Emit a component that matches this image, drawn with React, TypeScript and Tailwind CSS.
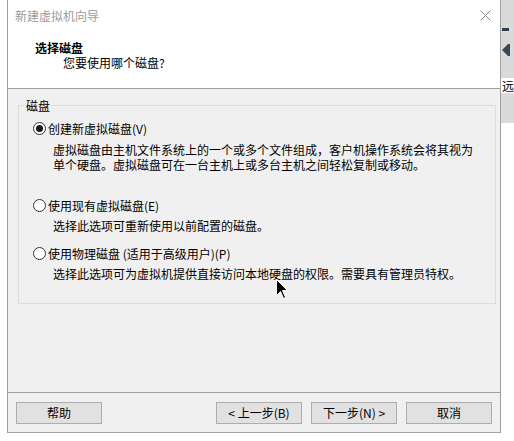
import React from "react";

const font = { fontFamily: '"Noto Sans CJK SC", "Noto Sans", sans-serif' };

function Radio({ checked }: { checked?: boolean }) {
  return (
    <span className="w-[13px] h-[13px] rounded-full border border-[#333333] bg-white flex items-center justify-center shrink-0">
      {checked && <span className="w-[7px] h-[7px] rounded-full bg-[#1a1a1a]" />}
    </span>
  );
}

function Option({ label, checked }: { label: string; checked?: boolean }) {
  return (
    <div className="flex items-center gap-[2px] pl-[14px] h-[15px]">
      <Radio checked={checked} />
      <span className="leading-[15px]">{label}</span>
    </div>
  );
}

function Button({ children }: { children: React.ReactNode }) {
  return (
    <button className="w-[86px] h-[22px] bg-[#e1e1e1] border border-[#adadad] text-[12px] leading-[20px] text-black flex items-center justify-center">
      {children}
    </button>
  );
}

export default function App() {
  return (
    <div className="relative w-[514px] h-[441px] bg-white flex overflow-hidden text-[12px] text-black" style={font}>
      {/* dialog */}
      <div className="ml-[7px] w-[499px] h-[433px] border-l border-r border-b border-[#a0a0a0] flex flex-col">
        {/* title bar */}
        <div className="h-[30px] bg-white flex items-center justify-between pl-[7px] pr-[9px]">
          <span className="text-[#9b9b9b] leading-[15px]">新建虚拟机向导</span>
          <svg width="11" height="11" viewBox="0 0 11 11">
            <path d="M0.5 0.5 L10.5 10.5 M10.5 0.5 L0.5 10.5" stroke="#8a8a8a" strokeWidth="1" />
          </svg>
        </div>

        {/* header */}
        <div className="h-[59px] bg-white border-b border-[#a0a0a0] pt-[10px]">
          <div className="pl-[27px] font-bold leading-[15px]">选择磁盘</div>
          <div className="pl-[55px] leading-[15px]">您要使用哪个磁盘?</div>
        </div>

        {/* body */}
        <div className="h-[303px] bg-[#f0f0f0] pt-[16px] pl-[10px]">
          <div className="relative w-[478px] h-[199px] border border-[#dcdcdc]">
            <span className="absolute left-[6px] top-[-8px] px-[1px] bg-[#f0f0f0] leading-[15px]">磁盘</span>
            <div className="pt-[15px]">
              <Option label="创建新虚拟磁盘(V)" checked />
              <div className="mt-[6px] pl-[34px] leading-[15px]">
                <div>虚拟磁盘由主机文件系统上的一个或多个文件组成，客户机操作系统会将其视为</div>
                <div>单个硬盘。虚拟磁盘可在一台主机上或多台主机之间轻松复制或移动。</div>
              </div>
              <div className="mt-[26px]">
                <Option label="使用现有虚拟磁盘(E)" />
              </div>
              <div className="mt-[5px] pl-[34px] leading-[15px]">选择此选项可重新使用以前配置的磁盘。</div>
              <div className="mt-[13px]">
                <Option label="使用物理磁盘 (适用于高级用户)(P)" />
              </div>
              <div className="mt-[5px] pl-[34px] leading-[15px]">
                选择此选项可为虚拟机提供直接访问本地硬盘的权限。需要具有管理员特权。
              </div>
            </div>
          </div>
        </div>

        {/* footer */}
        <div className="h-[40px] bg-[#f0f0f0] border-t border-[#a0a0a0] pt-[9px] px-[8px] flex items-start">
          <Button>帮助</Button>
          <div className="ml-auto flex gap-[9px]">
            <Button>&lt; 上一步(B)</Button>
            <Button>下一步(N) &gt;</Button>
            <Button>取消</Button>
          </div>
        </div>
      </div>

      {/* background window strip on the right */}
      <div className="flex-1 flex flex-col">
        <div className="h-[123px] bg-[#dadada] flex flex-col items-start">
          <div className="mt-[28px] ml-[1px] w-[7px] h-[3px] bg-[#2f3f4f]" />
          <svg width="8" height="12" viewBox="0 0 8 12" className="mt-[13px] ml-[1px]">
            <path d="M0 6 L6 0 L8 0 L8 12 L6 12 Z" fill="#3a4856" />
          </svg>
          <div className="mt-[22px] bg-white leading-[15px] text-[12px] pl-[1px] whitespace-nowrap">远</div>
        </div>
        <div className="flex-1 bg-white" />
      </div>

      {/* mouse cursor */}
      <svg width="13" height="21" viewBox="0 0 13 21" className="absolute left-[276px] top-[279px]">
        <path d="M0.5 0.5 L0.5 16.5 L4.5 12.5 L7.5 19.5 L9.5 18.5 L6.5 11.5 L11.5 11.5 Z" fill="#000" stroke="#fff" strokeWidth="1" />
      </svg>
    </div>
  );
}
